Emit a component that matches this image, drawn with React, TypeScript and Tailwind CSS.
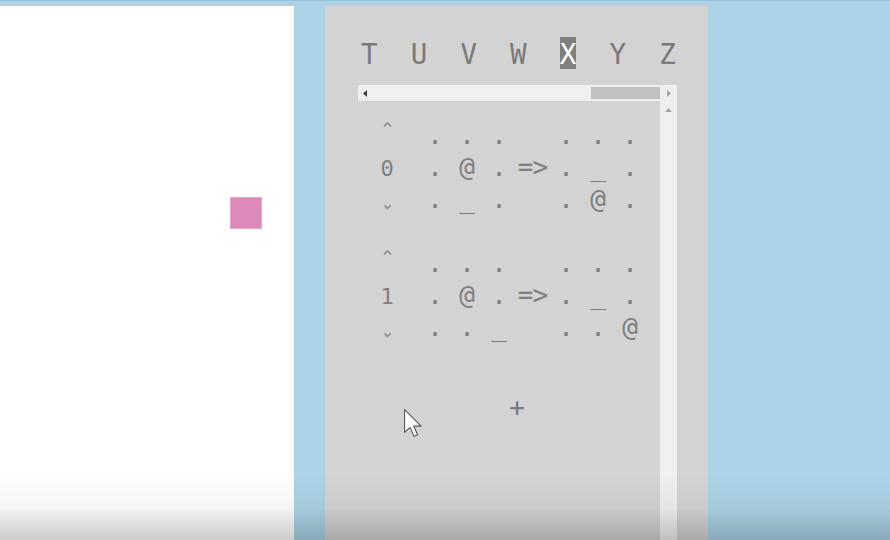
import React from 'react';

const LETTERS = ['T', 'U', 'V', 'W', 'X', 'Y', 'Z'];

type Grid = string[][];

const RULES: { label: string; from: Grid; to: Grid }[] = [
  {
    label: '0',
    from: [['.', '.', '.'], ['.', '@', '.'], ['.', '_', '.']],
    to: [['.', '.', '.'], ['.', '_', '.'], ['.', '@', '.']],
  },
  {
    label: '1',
    from: [['.', '.', '.'], ['.', '@', '.'], ['.', '.', '_']],
    to: [['.', '.', '.'], ['.', '_', '.'], ['.', '.', '@']],
  },
];

const Chevron = ({ up }: { up?: boolean }) => (
  <svg width="9" height="5" viewBox="0 0 9 5" className="block">
    <polyline
      points={up ? '1,4.5 4.5,1 8,4.5' : '1.5,0.5 4.5,3.5 7.5,0.5'}
      fill="none"
      stroke="#858585"
      strokeWidth="1.4"
    />
  </svg>
);

const Cells = ({ grid }: { grid: Grid }) => (
  <div className="grid grid-cols-3 w-[96px]">
    {grid.flat().map((c, i) => (
      <div key={i} className="h-[32px] leading-[32px] text-center">
        {c}
      </div>
    ))}
  </div>
);

const Rule = ({ label, from, to }: { label: string; from: Grid; to: Grid }) => (
  <div className="flex text-[26px] text-[#7f7f7f]">
    <div className="ml-[13px] w-[32px] flex flex-col items-center">
      <div className="h-[32px] pt-[3px]">
        <Chevron up />
      </div>
      <div className="h-[32px] leading-[35px] text-[22px]">{label}</div>
      <div className="h-[32px] pt-[22px]">
        <Chevron />
      </div>
    </div>
    <div className="ml-[16px]">
      <Cells grid={from} />
    </div>
    <div className="w-[35px] pt-[32px] h-[64px] leading-[32px] text-center tracking-[-1px]">=&gt;</div>
    <Cells grid={to} />
  </div>
);

const App: React.FC = () => {
  return (
    <div className="relative w-[890px] h-[540px] overflow-hidden bg-[#abd3e5] border-t border-[#98c4da] font-['DejaVu_Sans_Mono',monospace]">
      <div className="flex h-full pt-[5px] gap-[31px]">
        {/* left canvas */}
        <div className="w-[294px] bg-white pt-[191px] pl-[230px]">
          <div className="w-[32px] h-[32px] bg-[#dd8abb] border border-[#e8a6cc]" />
        </div>

        {/* rules panel */}
        <div className="w-[383px] bg-[#d3d3d3] pl-[33px] pr-[31px] pt-[31px] flex flex-col">
          <div className="flex gap-[33.1px] ml-[3px] h-[32px] text-[27.5px] leading-[34px] text-[#797979]">
            {LETTERS.map(l => (
              <span
                key={l}
                className={`w-[16.6px] h-[32px] text-center ${l === 'X' ? 'bg-[#7f7f7f] text-white' : ''}`}
              >
                {l}
              </span>
            ))}
          </div>

          <div className="mt-[16px] flex-1 flex flex-col">
            <div className="h-[16px] bg-[#efefef] flex items-center">
              <svg width="4" height="7" viewBox="0 0 4 7" className="ml-[5px]">
                <polygon points="4,0 0,3.5 4,7" fill="#3a3a3a" />
              </svg>
              <div className="ml-[224px] w-[69px] h-[12px] bg-[#c1c1c1]" />
              <div className="w-[17px] flex justify-center">
                <svg width="4" height="7" viewBox="0 0 4 7">
                  <polygon points="0,0 4,3.5 0,7" fill="#a5a5a5" />
                </svg>
              </div>
            </div>

            <div className="flex flex-1">
              <div className="w-[302px] pt-[18px] flex flex-col gap-[32px]">
                {RULES.map(r => (
                  <Rule key={r.label} {...r} />
                ))}
                <div className="ml-[143px] mt-[16px] w-[32px] h-[32px] leading-[32px] text-center text-[26px] text-[#7a7a7a]">
                  +
                </div>
              </div>
              <div className="w-[17px] bg-[#efefef] flex justify-center pt-[7px]">
                <svg width="7" height="4" viewBox="0 0 7 4">
                  <polygon points="0,4 3.5,0 7,4" fill="#a5a5a5" />
                </svg>
              </div>
            </div>
          </div>
        </div>
      </div>

      {/* mouse pointer */}
      <svg
        width="22"
        height="30"
        viewBox="0 0 14 19"
        className="absolute left-[403px] top-[407px]"
      >
        <path
          d="M1 1 L1 15.5 L4.5 12.3 L7 18 L9.3 17 L6.8 11.5 L11.5 11.5 Z"
          fill="#ffffff"
          stroke="#555"
          strokeWidth="0.7"
          strokeLinejoin="round"
        />
      </svg>

      {/* bottom shading */}
      <div className="absolute left-0 right-0 bottom-0 h-[65px] bg-gradient-to-b from-black/0 via-black/[0.04] to-black/20 pointer-events-none" />
    </div>
  );
};

export default App;
